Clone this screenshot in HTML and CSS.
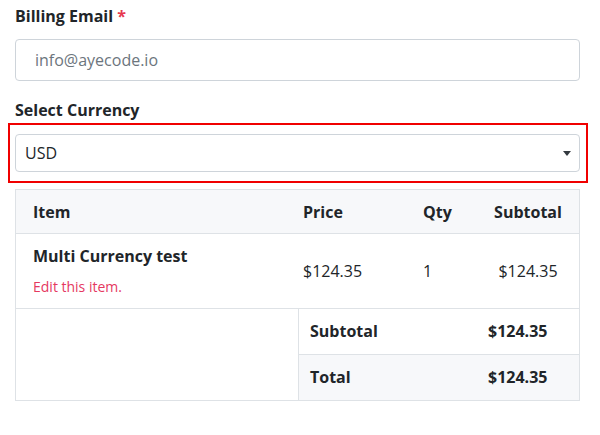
FILE: index.html
```html
<!DOCTYPE html>
<html lang="en">
<head>
    <meta charset="UTF-8">
    <meta name="viewport" content="width=device-width, initial-scale=1.0">
    <title>Checkout</title>
    <link rel="stylesheet" href="styles.css">
</head>
<body>
    <div class="checkout">
        <div class="field">
            <label class="field-label" for="email">Billing Email <span class="required">*</span></label>
            <input class="text-input" type="email" id="email" placeholder="info@ayecode.io">
        </div>

        <div class="field">
            <label class="field-label" for="currency">Select Currency</label>
            <div class="highlight">
                <div class="select-wrap">
                    <select class="select-input" id="currency">
                        <option>USD</option>
                        <option>EUR</option>
                        <option>GBP</option>
                    </select>
                </div>
            </div>
        </div>

        <div class="cart">
            <table class="cart-items">
                <thead>
                    <tr>
                        <th class="col-item">Item</th>
                        <th class="col-price">Price</th>
                        <th class="col-qty">Qty</th>
                        <th class="col-sub">Subtotal</th>
                    </tr>
                </thead>
                <tbody>
                    <tr>
                        <td class="col-item">
                            <div class="item-name">Multi Currency test</div>
                            <a class="item-edit" href="#">Edit this item.</a>
                        </td>
                        <td>$124.35</td>
                        <td>1</td>
                        <td class="col-sub">$124.35</td>
                    </tr>
                </tbody>
            </table>
            <div class="cart-totals">
                <div class="totals-spacer"></div>
                <div class="totals">
                    <div class="totals-row">
                        <span>Subtotal</span>
                        <span>$124.35</span>
                    </div>
                    <div class="totals-row totals-grand">
                        <span>Total</span>
                        <span>$124.35</span>
                    </div>
                </div>
            </div>
        </div>
    </div>
</body>
</html>
```

FILE: styles.css
```css
body {
    margin: 0;
    background-color: white;
    color: #212529;
    font-family: "Open Sans", "Noto Sans", sans-serif;
    font-size: 16px;
    line-height: 1.5;
}
.checkout {
    width: 565px;
    padding: 4px 15px 0;
}
.field {
    margin-bottom: 17px;
}
.field-label {
    display: block;
    font-weight: bold;
    margin-bottom: 11px;
}
.required {
    color: #e6394f;
}
.text-input {
    box-sizing: border-box;
    display: block;
    width: 100%;
    height: 42px;
    padding: 0 19px;
    border: 1px solid #ced4da;
    border-radius: 4px;
    font-family: inherit;
    font-size: 16px;
    color: #212529;
}
.text-input::placeholder {
    color: #6c757d;
}
.highlight {
    margin: -10px -8px 0 -7px;
    padding: 9px 6px 9px 5px;
    border: 2px solid #f00000;
}
.select-wrap {
    position: relative;
}
.select-wrap::after {
    content: "";
    position: absolute;
    top: 17px;
    right: 9px;
    border-left: 4px solid transparent;
    border-right: 4px solid transparent;
    border-top: 5px solid #343a40;
    pointer-events: none;
}
.select-input {
    box-sizing: border-box;
    display: block;
    width: 100%;
    height: 38px;
    padding: 0 9px;
    appearance: none;
    -webkit-appearance: none;
    background-color: white;
    border: 1px solid #ced4da;
    border-radius: 4px;
    font-family: inherit;
    font-size: 16px;
    color: #212529;
}
.cart {
    margin-top: -11px;
    border: 1px solid #dee2e6;
}
.cart-items {
    width: 100%;
    border-collapse: collapse;
    table-layout: fixed;
}
.cart-items th {
    text-align: left;
    font-weight: bold;
    padding: 10px 18px 9px;
    background-color: #f7f8fa;
    border-bottom: 1px solid #dee2e6;
}
.cart-items td {
    padding: 10px 18px 11px;
    vertical-align: middle;
}
.cart-items .col-item {
    width: 234px;
    padding-left: 17px;
}
.col-price { width: 84px; }
.col-qty { width: 36px; }
.cart-items .col-sub {
    text-align: center;
    padding: 10px 0 9px;
}
.cart-items td.col-sub {
    padding: 10px 0 11px;
}
.item-name {
    font-weight: bold;
}
.item-edit {
    display: block;
    margin-top: 8px;
    font-size: 14px;
    line-height: 21px;
    color: #e5395f;
    text-decoration: none;
}
.cart-totals {
    display: flex;
    border-top: 1px solid #dee2e6;
}
.totals-spacer {
    width: 282px;
    border-right: 1px solid #dee2e6;
}
.totals {
    flex: 1;
}
.totals-row {
    display: grid;
    grid-template-columns: 177px 1fr;
    font-weight: bold;
}
.totals-row span {
    padding: 10px 11px 11px;
}
.totals-row span + span {
    padding-left: 12px;
}
.totals-grand {
    background-color: #f7f8fa;
    border-top: 1px solid #dee2e6;
}
```
